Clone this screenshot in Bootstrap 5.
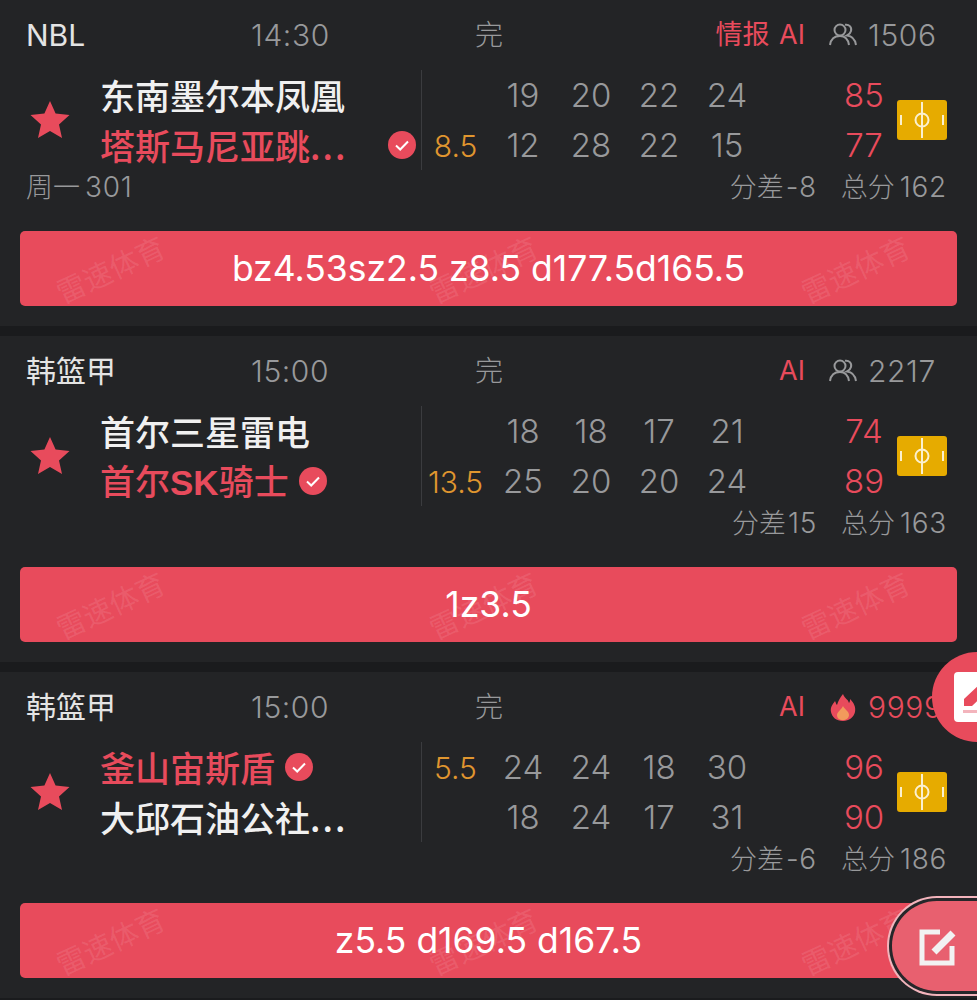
<!DOCTYPE html>
<html lang="zh-CN">
<head>
  <meta charset="UTF-8" />
  <meta name="viewport" content="width=device-width, initial-scale=1.0"/>
  <title>比赛列表</title>
  <link href="https://cdn.jsdelivr.net/npm/bootstrap@5.3.0/dist/css/bootstrap.min.css" rel="stylesheet">
  <style>
    html, body {
      height: 1000px;
      overflow: hidden;
    }
    body {
      background-color: #1a1b1d;
      color: #98999b;
      font-family: Inter, "Noto Sans CJK SC", sans-serif;
      font-weight: 300;
    }
    .game-card {
      background-color: #232426;
      height: 326px;
      margin-bottom: 10px;
    }
    .head-row {
      height: 70px;
      font-size: 28px;
    }
    .league-col {
      width: 251px;
      padding-left: 26px;
      color: #e4e4e4;
      font-size: 30px;
      font-weight: 400;
    }
    .time-col {
      width: 224px;
      font-size: 30px;
      letter-spacing: 0.6px;
    }
    .tags {
      margin-left: auto;
      color: #e84b5c;
      word-spacing: 2px;
      font-size: 27px;
      font-weight: 400;
    }
    .people-icon {
      margin-left: 24px;
      width: 28px;
      height: 28px;
    }
    .count-col {
      width: 109px;
      margin-left: 11px;
      white-space: nowrap;
      font-size: 30px;
      letter-spacing: 0.6px;
    }
    .body-row { height: 100px; }
    .star-col {
      width: 101px;
      padding-left: 30px;
    }
    .team-col {
      width: 321px;
      border-right: 1px solid #3b3c3f;
      padding-right: 5px;
    }
    .team-line {
      height: 50px;
      font-size: 35px;
      font-weight: 500;
      line-height: 48px;
      color: #f0f0f0;
      font-family: "Noto Sans CJK SC", sans-serif;
      white-space: nowrap;
      margin-left: -1px;
    }
    .team-line.winner { color: #e84b5c; }
    .dots { letter-spacing: 2px; }
    .latin-name {
      font-family: "Liberation Sans", sans-serif;
      font-weight: 700;
    }
    .check-icon {
      width: 28px;
      height: 28px;
      margin-left: 10px;
    }
    .score-line {
      height: 50px;
      font-size: 33px;
      padding-top: 2px;
    }
    .odds-cell {
      width: 67px;
      color: #e0962f;
      font-size: 30px;
      text-align: center;
    }
    .quarter-cell {
      width: 68px;
      text-align: center;
    }
    .total-cell {
      width: 68px;
      margin-left: 69px;
      color: #e84b5c;
      text-align: center;
    }
    .field-icon {
      width: 50px;
      height: 40px;
      margin-left: -1px;
    }
    .sub-row {
      height: 34px;
      font-size: 27px;
      padding: 0 30px 0 26px;
    }
    .sub-num {
      font-size: 28px;
      margin-left: 5px;
      letter-spacing: 0.7px;
    }
    .diff-text { margin-right: 24px; }
    .diff-text .sub-num { margin-left: 2px; }
    .tip-bar {
      height: 75px;
      margin: 27px 20px 0;
      background-color: #e84b5c;
      border-radius: 5px;
      color: #fff;
      font-size: 35.5px;
      font-weight: 400;
    }
    .mark-text {
      position: absolute;
      top: 20px;
      font-size: 29px;
      line-height: 1.2;
      font-weight: 400;
      color: rgba(255, 255, 255, 0.1);
      font-family: "Noto Sans CJK SC", sans-serif;
      transform: rotate(-25deg);
      white-space: nowrap;
    }
    .float-write {
      position: absolute;
      top: 652px;
      left: 932px;
      width: 45px;
      height: 90px;
      border-radius: 45px 0 0 45px;
      background-color: #e84b5c;
    }
    .float-write svg {
      position: absolute;
      left: 22px;
      top: 20px;
    }
    .float-edit {
      position: absolute;
      top: 898px;
      left: 889px;
      width: 88px;
      height: 96px;
      border-radius: 48px 0 0 48px;
      background-color: #e8606f;
      border: 3px solid #26272a;
      border-right: 0;
      box-shadow: 0 0 0 2px #f3b4bc;
    }
    .float-edit svg {
      position: absolute;
      left: 27px;
      top: 26px;
    }
  </style>
</head>
<body>

  <div id="gameList"></div>

  <div class="float-write">
    <svg width="23" height="50" viewBox="0 0 23 50">
      <rect width="40" height="50" rx="4" fill="#fff"/>
      <path d="M10 27 L26 12 L34 19 L18 34 L10 34 Z" fill="#e84b5c"/>
      <rect x="9" y="38" width="40" height="3" fill="#f3b4bc"/>
    </svg>
  </div>
  <div class="float-edit">
    <svg width="40" height="40" viewBox="0 0 40 40" fill="none">
      <path d="M21 5 H3 V36 H33 V19" stroke="#f2f2f2" stroke-width="5"/>
      <path d="M15 25 L34 6" stroke="#f2f2f2" stroke-width="7"/>
    </svg>
  </div>

  <script>
    const starSvg = `<svg width="40" height="38" viewBox="0 0 40 38"><path d="M20 0 L25.6 12.6 L39.5 14 L29 23.4 L32 37 L20 30 L8 37 L11 23.4 L.5 14 L14.4 12.6 Z" fill="#e84b5c"/></svg>`;
    const checkSvg = `<svg class="check-icon" viewBox="0 0 28 28"><circle cx="14" cy="14" r="14" fill="#e84b5c"/><path d="M8 14.5 L12.2 18.5 L20 10.5" fill="none" stroke="#fff" stroke-width="2"/></svg>`;
    const peopleSvg = `<svg class="people-icon" viewBox="0 0 28 28" fill="none" stroke="#98999b" stroke-width="2"><circle cx="11" cy="9" r="5.5"/><path d="M1 24 C2 17 6 15 11 15 C16 15 19 18 20 24"/><path d="M16 3.8 C20 3 23 6 22 10 C21.5 12 20 13.5 18 14.5 C23 15 26 18 27 24"/></svg>`;
    const fireSvg = `<svg class="people-icon" viewBox="0 0 28 28"><path d="M14 1 C16 6 19 6 20 10 C21 9 21 7 21 6 C25 10 27 14 26 19 C25 24 20 28 14 28 C7 28 3 24 2 19 C1 14 4 11 6 8 C7 10 7 11 8 12 C9 8 11 5 14 1 Z" fill="#e84b5c"/><path d="M14 13 C15 16 20 18 20 22 C20 25 17 27 14 27 C10 27 8 25 8 22 C8 19 12 17 14 13 Z" fill="#f29a5c"/></svg>`;
    const fieldSvg = `<svg class="field-icon" viewBox="0 0 50 40" fill="none"><rect width="50" height="40" rx="3" fill="#e6ab00"/><path d="M25 2 V38" stroke="#fbf0cf" stroke-width="2"/><circle cx="25" cy="20" r="6.5" stroke="#fbf0cf" stroke-width="2"/><path d="M4 15 V25 M46 15 V25" stroke="#fbf0cf" stroke-width="2"/></svg>`;

    const games = [
      {
        league: "NBL", time: "14:30", tags: "情报 AI", icon: peopleSvg, count: "1506", countRed: false,
        home: "东南墨尔本凤凰", away: '塔斯马尼亚跳<span class="dots">...</span>', winner: 1, wide: true,
        odds: ["", "8.5"], q1: [19, 20, 22, 24], q2: [12, 28, 22, 15], totals: [85, 77],
        note: ["周一", "301"], diff: "-8", sum: "162", tip: "bz4.53sz2.5 z8.5 d177.5d165.5"
      },
      {
        league: "韩篮甲", time: "15:00", tags: "AI", icon: peopleSvg, count: "2217", countRed: false,
        home: "首尔三星雷电", away: '首尔<span class="latin-name">SK</span>骑士', winner: 1,
        odds: ["", "13.5"], q1: [18, 18, 17, 21], q2: [25, 20, 20, 24], totals: [74, 89],
        note: ["", ""], diff: "15", sum: "163", tip: "1z3.5"
      },
      {
        league: "韩篮甲", time: "15:00", tags: "AI", icon: fireSvg, count: "9999", countRed: true,
        home: "釜山宙斯盾", away: '大邱石油公社<span class="dots">...</span>', winner: 0,
        odds: ["5.5", ""], q1: [24, 24, 18, 30], q2: [18, 24, 17, 31], totals: [96, 90],
        note: ["", ""], diff: "-6", sum: "186", tip: "z5.5 d169.5 d167.5"
      }
    ];

    function teamLine(name, isWinner, wide) {
      return `
        <div class="team-line d-flex align-items-center ${isWinner ? "winner" : ""}">
          <span>${name}</span>
          ${isWinner ? (wide ? `<span class="ms-auto d-flex">${checkSvg}</span>` : checkSvg) : ""}
        </div>`;
    }

    function scoreLine(odds, quarters, total) {
      return `
        <div class="score-line d-flex align-items-center">
          <div class="odds-cell">${odds}</div>
          ${quarters.map(q => `<div class="quarter-cell">${q}</div>`).join("")}
          <div class="total-cell">${total}</div>
        </div>`;
    }

    document.getElementById("gameList").innerHTML = games.map(g => `
      <div class="game-card">
        <div class="head-row d-flex align-items-center">
          <div class="league-col">${g.league}</div>
          <div class="time-col">${g.time}</div>
          <div>完</div>
          <div class="tags">${g.tags}</div>
          ${g.icon}
          <div class="count-col" ${g.countRed ? 'style="color:#e84b5c"' : ""}>${g.count}</div>
        </div>
        <div class="body-row d-flex">
          <div class="star-col d-flex align-items-center">${starSvg}</div>
          <div class="team-col">
            ${teamLine(g.home, g.winner === 0, false)}
            ${teamLine(g.away, g.winner === 1, g.wide)}
          </div>
          <div>
            ${scoreLine(g.odds[0], g.q1, g.totals[0])}
            ${scoreLine(g.odds[1], g.q2, g.totals[1])}
          </div>
          <div class="d-flex align-items-center">${fieldSvg}</div>
        </div>
        <div class="sub-row d-flex align-items-center">
          <div>${g.note[0]}<span class="sub-num">${g.note[1]}</span></div>
          <div class="diff-text ms-auto">分差<span class="sub-num">${g.diff}</span></div>
          <div>总分<span class="sub-num">${g.sum}</span></div>
        </div>
        <div class="tip-bar position-relative d-flex align-items-center justify-content-center">
          <span class="mark-text" style="left:32px">雷速体育</span>
          <span class="mark-text" style="left:405px">雷速体育</span>
          <span class="mark-text" style="left:777px">雷速体育</span>
          <span class="position-relative">${g.tip}</span>
        </div>
      </div>
    `).join("");
  </script>
  <script src="https://cdn.jsdelivr.net/npm/bootstrap@5.3.0/dist/js/bootstrap.bundle.min.js"></script>
</body>
</html>
